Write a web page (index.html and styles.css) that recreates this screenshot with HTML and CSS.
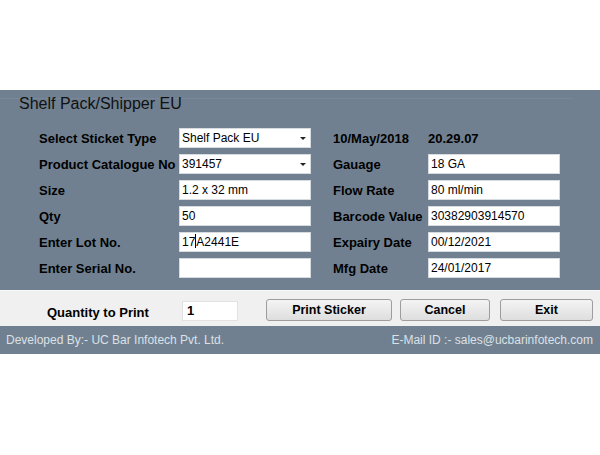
FILE: index.html
```html
<!DOCTYPE html>
<html lang="en">
<head>
    <meta charset="UTF-8">
    <title>Shelf Pack/Shipper EU</title>
    <link rel="stylesheet" href="styles.css">
</head>
<body>

<div class="panel">
    <div class="group-title">Shelf Pack/Shipper EU</div>
    <div class="form">
        <div class="col">
            <div class="row"><label>Select Sticket Type</label><div class="field select">Shelf Pack EU<span class="arrow"></span></div></div>
            <div class="row"><label>Product Catalogue No</label><div class="field select">391457<span class="arrow"></span></div></div>
            <div class="row"><label>Size</label><div class="field">1.2 x 32 mm</div></div>
            <div class="row"><label>Qty</label><div class="field">50</div></div>
            <div class="row"><label>Enter Lot No.</label><div class="field">17<span class="caret"></span>A2441E</div></div>
            <div class="row"><label>Enter Serial No.</label><div class="field"></div></div>
        </div>
        <div class="col right">
            <div class="row"><label>10/May/2018</label><span class="time">20.29.07</span></div>
            <div class="row"><label>Gauage</label><div class="field">18 GA</div></div>
            <div class="row"><label>Flow Rate</label><div class="field">80 ml/min</div></div>
            <div class="row"><label>Barcode Value</label><div class="field">30382903914570</div></div>
            <div class="row"><label>Expairy Date</label><div class="field">00/12/2021</div></div>
            <div class="row"><label>Mfg Date</label><div class="field">24/01/2017</div></div>
        </div>
    </div>
</div>

<div class="actions">
    <label class="qty-label">Quantity to Print</label>
    <div class="field qty">1</div>
    <button class="btn print">Print Sticker</button>
    <button class="btn cancel">Cancel</button>
    <button class="btn exit">Exit</button>
</div>

<div class="footer">
    <span>Developed By:- UC Bar Infotech Pvt. Ltd.</span>
    <span>E-Mail ID :- sales@ucbarinfotech.com</span>
</div>

</body>
</html>
```

FILE: styles.css
```css
body {
    margin: 0;
    background: white;
    font-family: "Liberation Sans", Arial, sans-serif;
    font-size: 13px;
    color: #000;
}
.panel {
    margin-top: 90px;
    height: 200px;
    background: #708090;
    box-sizing: border-box;
    padding-top: 8px;
}
.group-title {
    font-size: 16px;
    padding-left: 19px;
    border-top: 1px solid #78889a;
    margin-right: 27px;
    height: 26px;
    line-height: 10px;
    color: #111;
}
.form {
    display: flex;
    padding-left: 39px;
    gap: 22px;
}
.col {
    display: flex;
    flex-direction: column;
}
.row {
    display: flex;
    align-items: center;
    height: 26px;
}
.row label {
    width: 140px;
    font-weight: bold;
}
.right .row label {
    width: 95px;
}
.time {
    font-weight: bold;
}
.field {
    width: 132px;
    height: 20px;
    box-sizing: border-box;
    background: white;
    border: 1px solid #d6dbe0;
    padding-left: 2px;
    font-size: 12px;
    line-height: 18px;
    position: relative;
}
.arrow {
    position: absolute;
    right: 4px;
    top: 8px;
    border-left: 3px solid transparent;
    border-right: 3px solid transparent;
    border-top: 3px solid #222;
}
.caret {
    display: inline-block;
    width: 1px;
    height: 14px;
    background: #000;
    vertical-align: -2px;
}
.actions {
    height: 36px;
    background: #f0f0f0;
    border-top: 1px solid #fafafa;
    box-sizing: border-box;
    display: flex;
    align-items: center;
}
.qty-label {
    font-weight: bold;
    margin-left: 47px;
    width: 135px;
    padding-top: 7px;
}
.field.qty {
    width: 56px;
    border-color: #e2e2e2;
    font-size: 13px;
    font-weight: bold;
    padding-left: 4px;
    margin-top: 4px;
}
.btn {
    font-family: "Liberation Sans", Arial, sans-serif;
    font-size: 12.5px;
    font-weight: bold;
    height: 22px;
    border: 1px solid #9d9d9d;
    border-radius: 3px;
    background: linear-gradient(#f4f4f4, #dedede);
    padding: 0;
    margin-top: 2px;
}
.print {
    width: 126px;
    margin-left: 28px;
}
.cancel {
    width: 90px;
    margin-left: 8px;
}
.exit {
    width: 93px;
    margin-left: 10px;
}
.footer {
    height: 28px;
    background: #708090;
    color: #dce1e6;
    font-size: 12px;
    display: flex;
    justify-content: space-between;
    align-items: center;
    padding: 0 7px 0 6px;
}
```
